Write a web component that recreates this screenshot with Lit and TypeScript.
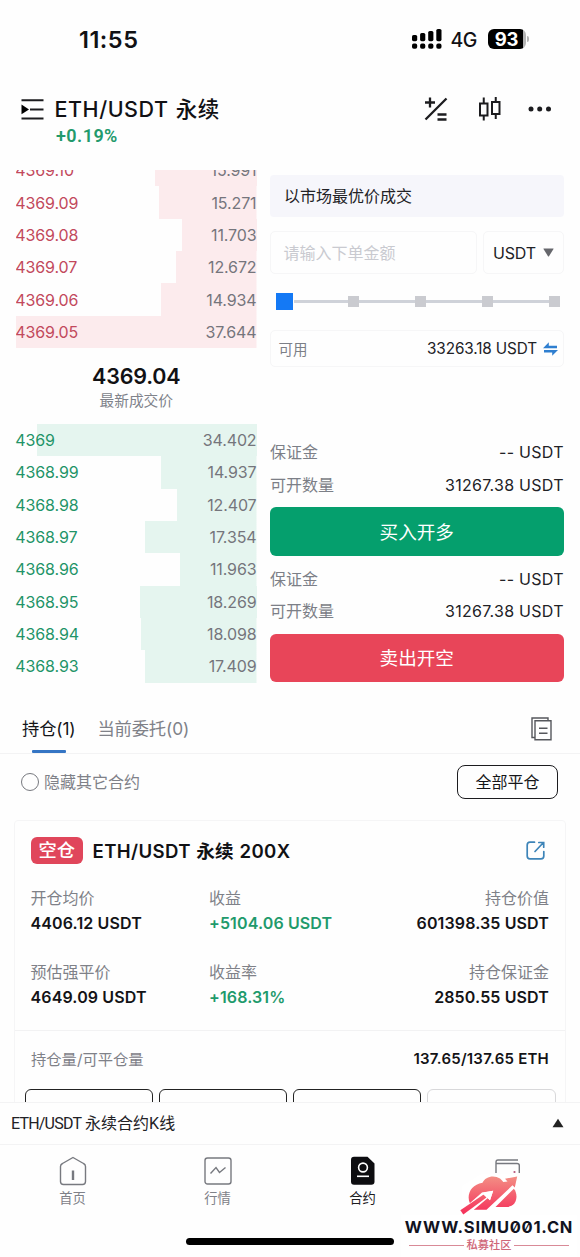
import { LitElement, html, css, svg } from "lit";
import { customElement, property } from "lit/decorators.js";

interface Level { price: string; size: string; width: number; }

const ASKS: Level[] = [
  { price: "4369.10", size: "15.991", width: 102 },
  { price: "4369.09", size: "15.271", width: 97.5 },
  { price: "4369.08", size: "11.703", width: 75 },
  { price: "4369.07", size: "12.672", width: 80.5 },
  { price: "4369.06", size: "14.934", width: 95.5 },
  { price: "4369.05", size: "37.644", width: 240.5 },
];
const BIDS: Level[] = [
  { price: "4369", size: "34.402", width: 220 },
  { price: "4368.99", size: "14.937", width: 95.5 },
  { price: "4368.98", size: "12.407", width: 79.5 },
  { price: "4368.97", size: "17.354", width: 111.5 },
  { price: "4368.96", size: "11.963", width: 76.5 },
  { price: "4368.95", size: "18.269", width: 117 },
  { price: "4368.94", size: "18.098", width: 115.5 },
  { price: "4368.93", size: "17.409", width: 111.5 },
];

@customElement("status-bar")
class StatusBar extends LitElement {
  static styles = css`
    :host { display: flex; align-items: center; justify-content: space-between; height: 78px; padding: 0 51.5px 0 79px; }
    .time { font-size: 23.5px; font-weight: 600; line-height: 28px; letter-spacing: 0.5px; padding-top: 1px; }
    .right { display: flex; align-items: center; }
    .net { font-size: 19.5px; font-weight: 500; margin: 2px 0 0 9px; width: 28px; letter-spacing: -0.5px; line-height: 24px; }
    .battery { width: 38px; height: 20.5px; border-radius: 6px; background: linear-gradient(90deg, #000 93%, #b5b5b5 93%); color: #fff; font-size: 18.5px; font-weight: 700; text-align: center; line-height: 21px; margin-left: 9px; letter-spacing: -0.3px; }
    .tip { width: 2px; height: 6px; border-radius: 0 2px 2px 0; background: #b5b5b5; margin-left: 1px; }
  `;
  render() {
    return html`
      <span class="time">11:55</span>
      <div class="right">
        <svg width="30" height="20" viewBox="0 0 30 20">
          ${[0, 1, 2, 3].map((i) => svg`
            <rect x=${i * 8.1} y=${6 - i * 2} width="5.2" height=${6.2 + i * 2} rx="1.6"/>
            <rect x=${i * 8.1} y="14.6" width="5.2" height="5.2" rx="1.8"/>`)}
        </svg>
        <span class="net">4G</span>
        <span class="battery">93</span><span class="tip"></span>
      </div>`;
  }
}

@customElement("order-row")
class OrderRow extends LitElement {
  @property() price = "";
  @property() size = "";
  @property() side = "ask";
  @property({ type: Number }) depth = 0;
  static styles = css`
    :host { display: block; height: 32.33px; flex: none; }
    .row { height: 100%; display: flex; align-items: center; justify-content: space-between; font-size: 16px; letter-spacing: -0.12px; background-repeat: no-repeat; background-position: right top; }
    .ask { background-image: linear-gradient(#fcebed, #fcebed); }
    .bid { background-image: linear-gradient(#e5f5ef, #e5f5ef); }
    .price { margin-left: -0.7px; }
    .ask .price { color: #c2495c; }
    .bid .price { color: #1f9468; }
    .size { color: #75757c; }
  `;
  render() {
    return html`<div class="row ${this.side}" style="background-size:${this.depth}px 100%">
      <span class="price">${this.price}</span><span class="size">${this.size}</span></div>`;
  }
}

@customElement("order-book")
class OrderBook extends LitElement {
  static styles = css`
    :host { display: flex; flex-direction: column; width: 240.5px; }
    .asks { height: 178px; overflow: hidden; display: flex; flex-direction: column; justify-content: flex-end; }
    .mid { height: 76px; display: flex; flex-direction: column; align-items: center; }
    .last { font-size: 21.5px; font-weight: 600; line-height: 28px; margin-top: 14px; letter-spacing: -0.2px; }
    .cap { font-size: 14.7px; line-height: 20px; color: #80838b; margin-top: 1px; }
  `;
  render() {
    const row = (l: Level, side: string) =>
      html`<order-row side=${side} price=${l.price} size=${l.size} depth=${l.width}></order-row>`;
    return html`
      <div class="asks">${ASKS.map((l) => row(l, "ask"))}</div>
      <div class="mid"><span class="last">4369.04</span><span class="cap">最新成交价</span></div>
      <div class="bids">${BIDS.map((l) => row(l, "bid"))}</div>`;
  }
}

@customElement("order-form")
class OrderForm extends LitElement {
  static styles = css`
    :host { display: flex; flex-direction: column; width: 293.5px; padding-top: 5px; font-size: 16px; box-sizing: border-box; }
    * { box-sizing: border-box; }
    .market { height: 42px; border-radius: 4px; background: #f6f6fb; padding-left: 14px; line-height: 42px; color: #222226; }
    .inputs { display: flex; gap: 6px; margin-top: 14px; height: 43px; }
    .box { border: 1px solid #f6f6f7; border-radius: 5px; display: flex; align-items: center; }
    .amount { flex: 1; padding: 0 0 2px 12.5px; color: #c9cad0; }
    .unit { width: 80.5px; padding: 0 9px; justify-content: space-between; color: #222226; letter-spacing: -0.2px; }
    .slider { display: flex; align-items: center; height: 17px; margin: 19px 4px 0 6px; justify-content: space-between; background: linear-gradient(#cfd2d9, #cfd2d9) 18px center / calc(100% - 18px) 3px no-repeat; }
    .knob { width: 16.5px; height: 16.5px; background: #1479f5; }
    .tick { width: 11px; height: 11px; background: #cacbd0; }
    .avail { height: 37px; margin-top: 20px; padding: 0 5px 0 7.5px; color: #7c7f87; font-size: 14.5px; }
    .avail span { padding-bottom: 1px; }
    .avail .num { margin-left: auto; margin-right: 5.5px; font-size: 15.3px; letter-spacing: -0.12px; }
    .num { color: #222226; letter-spacing: 0.28px; margin-right: -0.3px; }
    .group { padding-top: 6px; }
    .group + .group { padding-top: 7px; }
    .line { display: flex; justify-content: space-between; align-items: center; height: 32.5px; color: #7c7f87; }
    .key { padding-bottom: 2px; }
    .btn { height: 48.6px; border-radius: 6px; display: flex; align-items: center; justify-content: center; color: #fff; font-size: 18.6px; margin-top: 6px; padding-bottom: 2px; }
    .buy { background: #059f6d; }
    .sell { background: #e84559; }
    .spacer { height: 63px; flex: none; }
  `;
  group(label: string, kind: string) {
    return html`<div class="group">
      <div class="line"><span class="key">保证金</span><span class="num">-- USDT</span></div>
      <div class="line"><span class="key">可开数量</span><span class="num">31267.38 USDT</span></div>
      <div class="btn ${kind}">${label}</div></div>`;
  }
  render() {
    return html`
      <div class="market">以市场最优价成交</div>
      <div class="inputs">
        <div class="box amount">请输入下单金额</div>
        <div class="box unit">USDT<svg width="11" height="9" viewBox="0 0 11 9"><path d="M.8.5h9.400q.6 0 .3.600L6 8.200q-.5.600-1 0L.5 1.100Q.2.500.8.500z" fill="#66676c"/></svg></div>
      </div>
      <div class="slider"><i class="knob"></i>${[0, 1, 2, 3].map(() => html`<i class="tick"></i>`)}</div>
      <div class="box avail"><span>可用</span><span class="num">33263.18 USDT</span>
        <svg width="15" height="14" viewBox="0 0 15 14" fill="#2f7fd0"><path d="M0 6.200 5.800.3V3.700H14V6.200z"/><path d="M15 8 9.200 13.800V10.500H1V8z"/></svg>
      </div>
      <div class="spacer"></div>
      ${this.group("买入开多", "buy")}
      ${this.group("卖出开空", "sell")}`;
  }
}

@customElement("position-card")
class PositionCard extends LitElement {
  static styles = css`
    :host { display: block; height: 282px; overflow: hidden; margin: 0 14px; }
    * { box-sizing: border-box; }
    .card { height: 320px; border: 1px solid #f5f5f6; border-radius: 4px; }
    .head { display: flex; align-items: center; height: 59px; padding: 0 20px 0 16px; }
    .badge { width: 51.5px; height: 27px; border-radius: 6px; background: #e0465b; color: #fff; font-size: 18.3px; font-weight: 500; line-height: 26px; text-align: center; }
    .title { font-size: 18.6px; font-weight: 600; margin: 0 auto 0 10px; padding-bottom: 2px; letter-spacing: 0.37px; word-spacing: 0.3px; }
    .stats { display: grid; grid-template-columns: 178.5px 1fr auto; padding: 6px 16px 0 15.5px; row-gap: 25px; height: 150px; align-content: start; }
    .cell { display: flex; flex-direction: column; }
    .end { align-items: flex-end; }
    .label { color: #7f8188; font-size: 16px; line-height: 25px; }
    .value { font-size: 16px; font-weight: 600; line-height: 24px; letter-spacing: 0.13px; color: #131316; white-space: nowrap; }
    .up { color: #1f9a6c; }
    .qty { display: flex; justify-content: space-between; align-items: center; height: 59px; padding: 0 16px 3px; border-top: 1px solid #f2f2f3; color: #7f8188; font-size: 15.3px; }
    .qty span:first-child { padding-bottom: 2px; }
    .qty .value { font-size: 15px; letter-spacing: 0.22px; }
    .actions { display: grid; grid-template-columns: repeat(4, 1fr); gap: 5.6px; padding: 0 9.500px; }
    .action { height: 40px; border: 1.5px solid #222; border-radius: 6px; }
    .off { border-color: #d8d8da; }
  `;
  cell(label: string, value: string, cls = "", vcls = "") {
    return html`<div class="cell ${cls}"><span class="label">${label}</span><span class="value ${vcls}">${value}</span></div>`;
  }
  render() {
    return html`<div class="card">
      <div class="head"><span class="badge">空仓</span><span class="title">ETH/USDT 永续 200X</span>
        <svg width="19" height="19" viewBox="0 0 19 19" fill="none" stroke="#3d84b8" stroke-width="1.7" stroke-linecap="round"><path d="M8.500 1.200H4Q1.200 1.200 1.200 4v11q0 2.800 2.800 2.800h11q2.800 0 2.800-2.800v-4.500M9 10.500 17 2M12.800 1.500h4.900v4.700"/></svg>
      </div>
      <div class="stats">
        ${this.cell("开仓均价", "4406.12 USDT")}${this.cell("收益", "+5104.06 USDT", "", "up")}${this.cell("持仓价值", "601398.35 USDT", "end")}
        ${this.cell("预估强平价", "4649.09 USDT")}${this.cell("收益率", "+168.31%", "", "up")}${this.cell("持仓保证金", "2850.55 USDT", "end")}
      </div>
      <div class="qty"><span>持仓量/可平仓量</span><span class="value">137.65/137.65 ETH</span></div>
      <div class="actions"><i class="action"></i><i class="action"></i><i class="action"></i><i class="action off"></i></div>
    </div>`;
  }
}

@customElement("site-mark")
class SiteMark extends LitElement {
  static styles = css`
    :host { display: flex; flex-direction: column; align-items: center; width: 176px; height: 84px; }
    .logo { display: block; }
    .plate { background: #fff; width: 176px; height: 42px; display: flex; flex-direction: column; align-items: center; }
    .url { font-size: 16.5px; font-weight: 700; line-height: 19px; color: #11131f; letter-spacing: 0.75px; font-feature-settings: "zero"; white-space: nowrap; margin-top: 3px; }
    .sub { display: flex; align-items: center; gap: 3px; color: #cf6678; font-size: 11.2px; line-height: 14px; margin-top: 1px; font-weight: 500; }
    .rule { width: 54.5px; height: 1px; background: #d98a97; }
  `;
  render() {
    return html`
      <svg class="logo" width="176" height="42" viewBox="401 1173 176 42">
        <defs><linearGradient id="g" gradientUnits="userSpaceOnUse" x1="0" y1="1176" x2="0" y2="1214"><stop offset="0" stop-color="#f39085"/><stop offset="1" stop-color="#f5305a"/></linearGradient></defs>
        <path d="M482 1173.700h38v42h-58V1186z" fill="#fff"/>
        <path d="M470 1203.500C466 1195 471 1184.500 482.500 1182.800C485 1176.500 494 1174.500 500 1178.500Q502 1180 503.300 1182L507.500 1181.500 505 1178.700 517.200 1176.500 514.800 1187.500 512.500 1185.300 486.500 1209.800H474z" fill="url(#g)"/>
        <path d="M482 1192.500 493.200 1190.800 490 1200.300 487.800 1198 473 1210.500 464 1215 462 1210z" fill="#fff"/>
        <path d="M460.300 1210.300 484 1194.300 486.500 1197.500 463.300 1214.600z" fill="url(#g)"/>
        <path d="M481.500 1193 493.200 1190.800 490 1200.300z" fill="#fff"/>
        <path d="M495.500 1206.900 513.800 1188.800C518.500 1194 517.500 1206.900 506.500 1206.900z" fill="url(#g)"/>
      </svg>
      <div class="plate">
        <span class="url">WWW.SIMU001.CN</span>
        <div class="sub"><i class="rule"></i><span>私募社区</span><i class="rule"></i></div>
      </div>`;
  }
}

@customElement("app-root")
class AppRoot extends LitElement {
  static styles = css`
    :host { display: flex; flex-direction: column; position: relative; width: 580px; height: 1257px; overflow: hidden; background: #fefefe; color: #111114; font-family: Inter, "Noto Sans CJK SC", sans-serif; }
    * { box-sizing: border-box; }
    svg { display: block; flex: none; }
    .header { display: flex; height: 92px; padding: 18px 28.500px 0 20.500px; align-items: flex-start; }
    .menu { margin: 2px 11px 0 0; }
    .pair { flex: 1; display: flex; flex-direction: column; }
    .name { font-size: 21.500px; font-weight: 500; line-height: 28px; margin-top: -1px; letter-spacing: 0.550px; word-spacing: 0.800px; }
    .change { font-family: Roboto, sans-serif; font-weight: 600; font-size: 18px; line-height: 22px; color: #229a6c; margin: 2px 0 0 1.500px; letter-spacing: 0.450px; }
    .tools { display: flex; align-items: center; }
    .calc { margin-right: 30px; }
    .candle { margin-right: 26.500px; }
    .trade { display: flex; justify-content: space-between; padding: 0 16.500px 0 16px; height: 513px; }
    .tabs { display: flex; height: 71px; border-bottom: 1px solid #f3f3f4; padding: 0 28px 0 22px; gap: 22px; font-size: 17.300px; }
    .tab { height: 70px; display: flex; flex-direction: column; align-items: center; color: #7f8188; padding-top: 34px; line-height: 24px; letter-spacing: -0.150px; }
    .active { color: #151518; }
    .active::after { content: ""; width: 34px; height: 3px; border-radius: 1px; background: #3575c4; margin-top: 9px; flex: none; }
    .docs { margin: 34px 0 0 auto; }
    .filter { display: flex; align-items: center; height: 66px; padding: 0 22px 10px 21px; color: #7f8188; font-size: 16px; }
    .radio { width: 18px; height: 18px; border: 1.700px solid #77797f; border-radius: 50%; margin-right: 5px; }
    .hide { padding-bottom: 3px; }
    .close { margin-left: auto; width: 101px; height: 33.500px; border: 1.500px solid #1c1c1f; border-radius: 8px; color: #151518; display: flex; align-items: center; justify-content: center; padding-bottom: 3px; }
    .kline { height: 42px; display: flex; align-items: center; justify-content: space-between; border-top: 1px solid #f3f3f4; padding: 0 16px 2px 11px; font-family: Roboto, "Noto Sans CJK SC", sans-serif; font-size: 16px; color: #222226; }
    .caption { padding-bottom: 1px; }
    .latin { letter-spacing: -0.800px; }
    .nav { display: grid; grid-template-columns: repeat(4, 145px); height: 94px; border-top: 1px solid #f3f3f4; padding-top: 11px; }
    .item { display: flex; flex-direction: column; align-items: center; font-size: 13.300px; line-height: 20px; color: #7f8188; gap: 2px; }
    .on { color: #1c1c1f; }
    .home { width: 208px; height: 7px; border-radius: 4px; background: #000; margin-left: 186px; }
    .mark { position: absolute; left: 401px; top: 1173px; }
  `;
  render() {
    return html`
      <status-bar></status-bar>
      <div class="header">
        <svg class="menu" width="23" height="23" viewBox="0 0 23 23"><path d="M.5 2.300h22M9 11.400h13.500M.5 20.500h22" stroke="#1c1c1f" stroke-width="2"/><path d="M.5 6.500 8 11.400.5 16.300z"/></svg>
        <div class="pair"><span class="name">ETH/USDT 永续</span><span class="change">+0.19%</span></div>
        <div class="tools">
          <svg class="calc" width="24" height="26" viewBox="0 0 24 26" fill="none" stroke="#1c1c1f" stroke-width="2.300"><path d="M1.500 23.500 22.500 2.500M1 6.500h10M6 1.500v10M13.500 18.500h9M13.500 23.500h9"/></svg>
          <svg class="candle" width="23" height="26" viewBox="0 0 23 26" fill="none" stroke="#1c1c1f" stroke-width="2"><path d="M2 7.500h7.500v12H2zM14 6h7.500v12H14zM5.750 1.500v6M5.750 19.500v5M17.750 1v5M17.750 18v5"/></svg>
          <svg width="24" height="26" viewBox="0 0 24 26" fill="#1c1c1f"><circle cx="3" cy="13" r="2.500"/><circle cx="11.700" cy="13" r="2.500"/><circle cx="20.500" cy="13" r="2.500"/></svg>
        </div>
      </div>
      <div class="trade"><order-book></order-book><order-form></order-form></div>
      <div class="tabs">
        <div class="tab active">持仓(1)</div><div class="tab">当前委托(0)</div>
        <svg class="docs" width="21" height="24" viewBox="0 0 21 24" fill="none" stroke="#55575c" stroke-width="1.400"><path d="M3.500 20.500H1V1h16v2.500M4 3.700h16v19H4zM8 11.300h8.500M8 16.300h8.500"/></svg>
      </div>
      <div class="filter"><i class="radio"></i><span class="hide">隐藏其它合约</span><span class="close">全部平仓</span></div>
      <position-card></position-card>
      <div class="kline"><span class="caption"><span class="latin">ETH/USDT</span> 永续合约K线</span><svg width="12" height="10" viewBox="0 0 12 10"><path d="M6 .8 11.500 9.300H.5z" fill="#222"/></svg></div>
      <div class="nav">
        <div class="item"><svg width="28" height="30" viewBox="0 0 28 30" fill="none" stroke="#77797f" stroke-width="1.400"><path d="M14 1.500 24.500 7.500Q26.500 8.500 26.500 10.500V25.500Q26.500 28.500 23.500 28.500H4.500Q1.500 28.500 1.500 25.500V10.500Q1.500 8.500 3.500 7.500z"/><path d="M14 14.500v9.500" stroke-width="2.400"/></svg>首页</div>
        <div class="item"><svg width="28" height="30" viewBox="0 0 28 30" fill="none" stroke="#77797f" stroke-width="1.400"><rect x="1" y="2" width="26" height="26" rx="2.500"/><path d="M6.500 17.500 12 11.500 15.500 16.500 21.500 11.500"/></svg>行情</div>
        <div class="item on"><svg width="28" height="30" viewBox="0 0 28 30"><path d="M5 .8h13.500L25.500 7.500V25.500Q25.500 28.800 22.300 28.800H5Q2 28.800 2 25.500V4Q2 .8 5 .8z" fill="#0d0d10"/><g fill="none" stroke="#fff" stroke-width="1.600"><circle cx="14" cy="11.500" r="4.400"/><path d="M8 20.300h12"/></g></svg>合约</div>
        <div class="item"><svg width="28" height="30" viewBox="0 0 28 30" fill="none" stroke="#77797f" stroke-width="1.400"><path d="M24 4H4Q2 4 2 6.500V17M2 7.500H23Q25.300 7.500 25.300 9.500V17"/><circle cx="20.500" cy="16" r="1.100" fill="#b3557a" stroke="none"/></svg></div>
      </div>
      <div class="home"></div>
      <site-mark class="mark"></site-mark>`;
  }
}
